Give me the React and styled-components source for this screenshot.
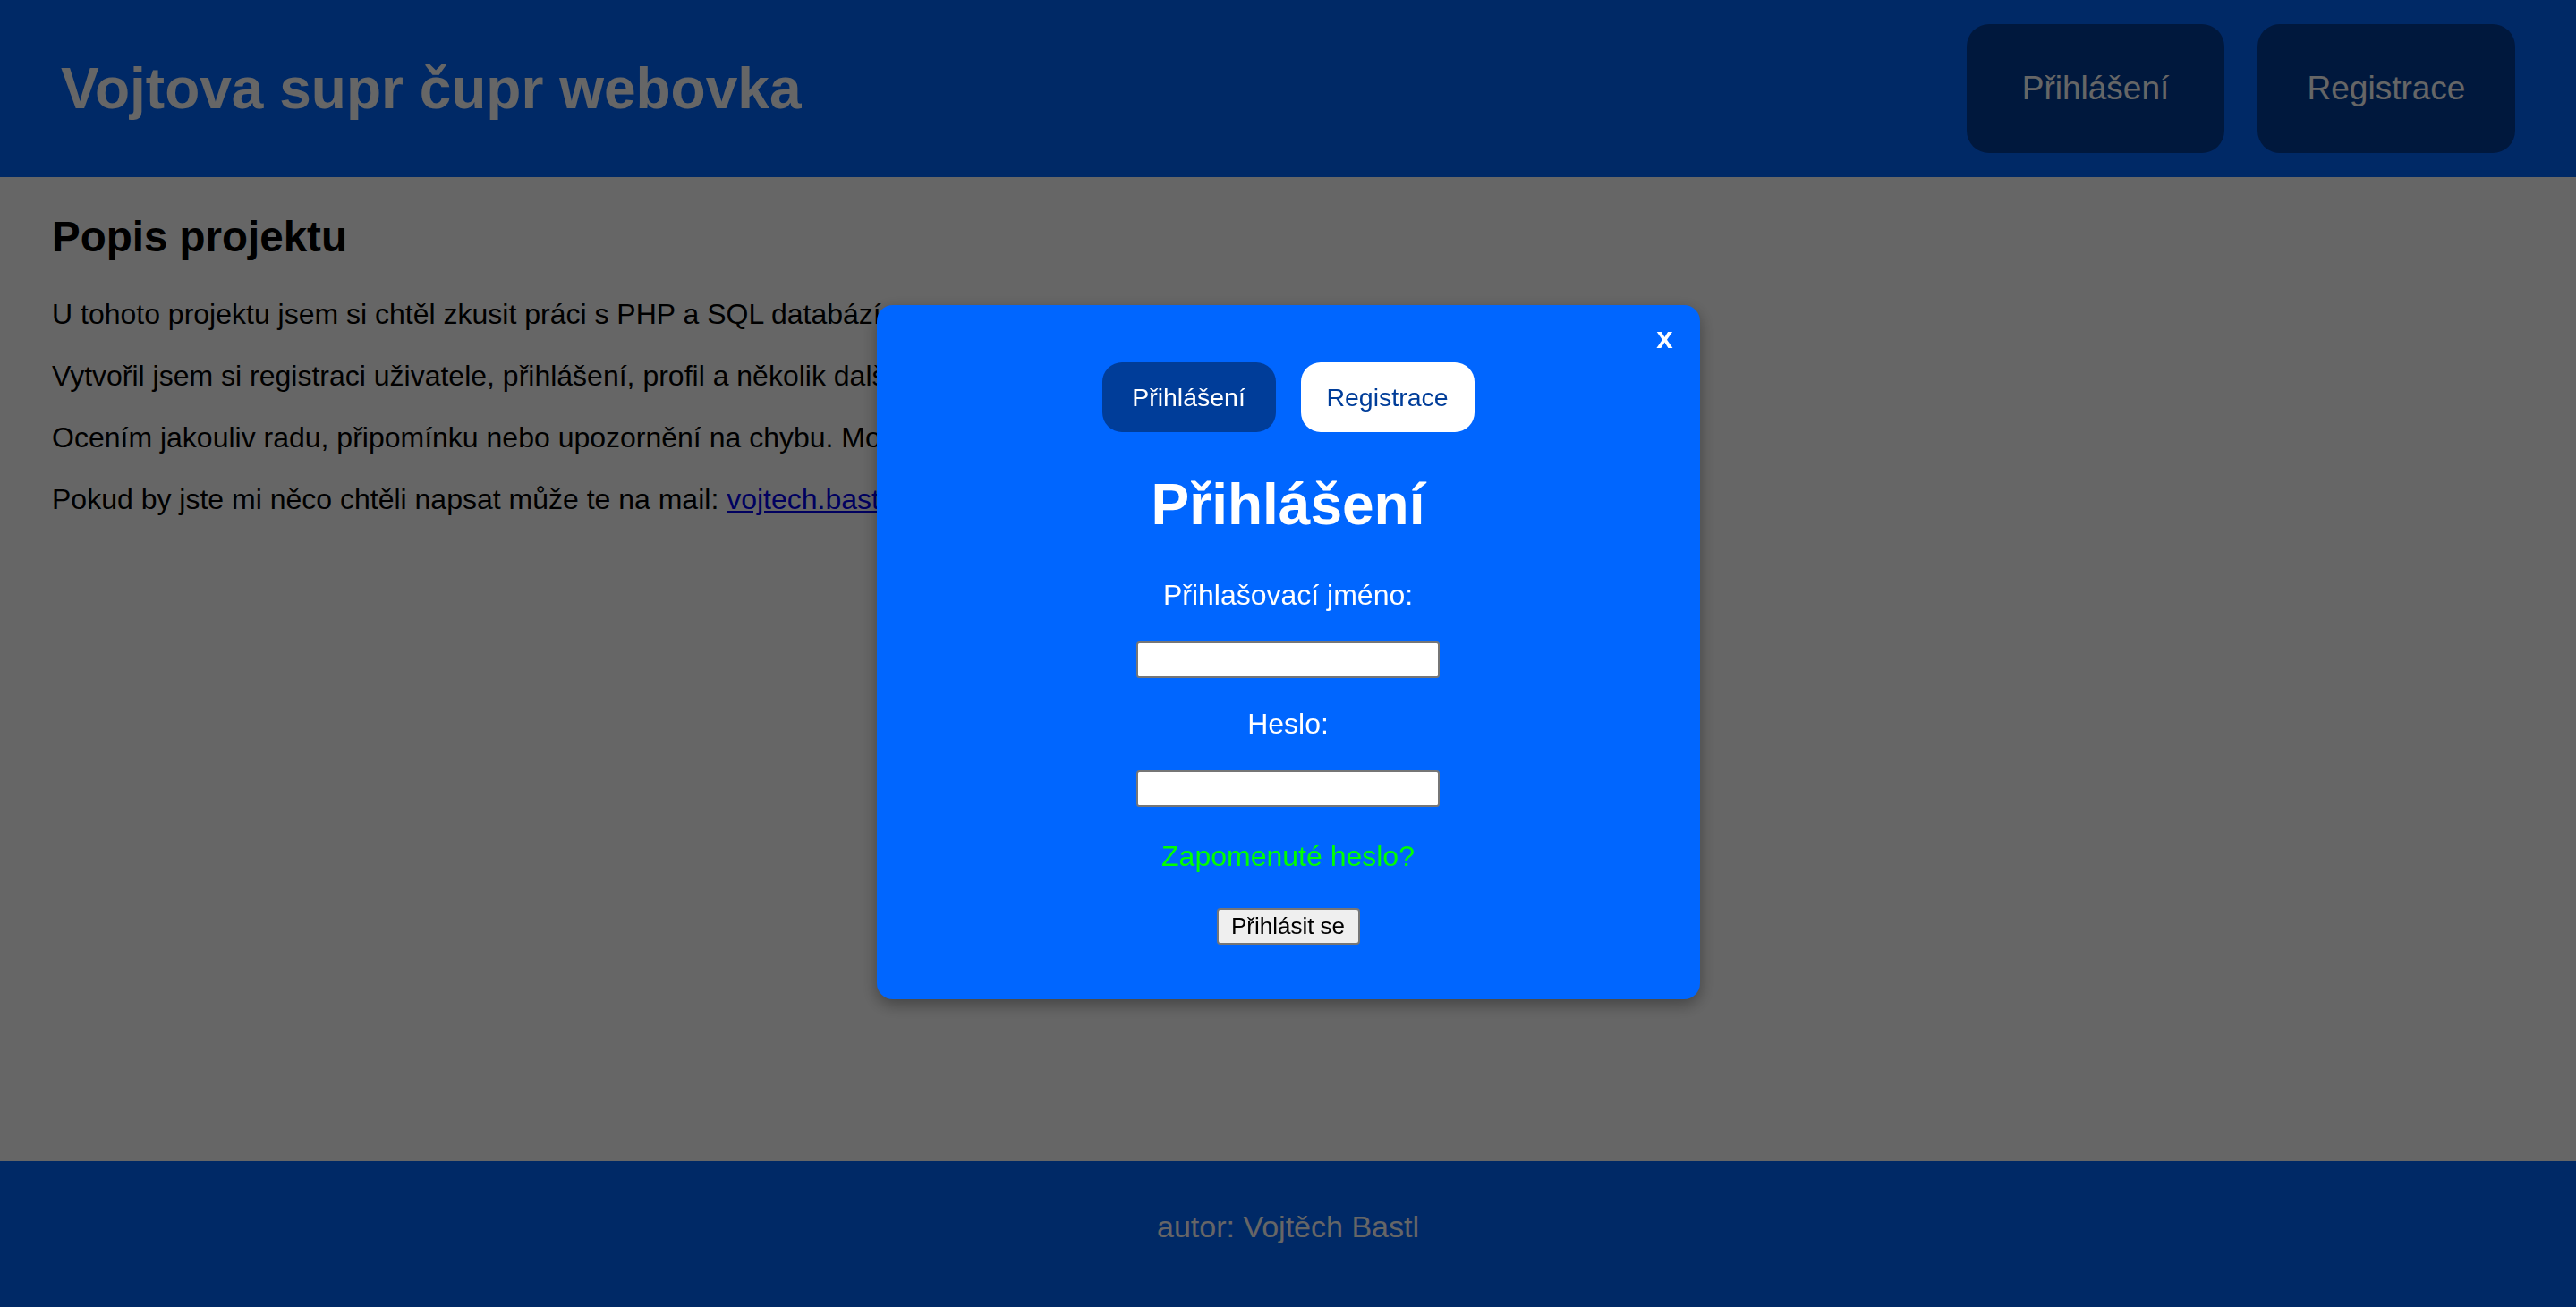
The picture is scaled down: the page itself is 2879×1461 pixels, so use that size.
import React from 'react'
import styled, { createGlobalStyle } from 'styled-components'

const GlobalStyle = createGlobalStyle`
    html, body {
        margin: 0;
        padding: 0;
        background: #fff;
        font-family: "Liberation Sans", Arial, sans-serif;
    }
    * {
        box-sizing: border-box;
    }
`

function App() {
    return (
      <>
        <GlobalStyle />
        <Page>
            <Header>
                <Title>Vojtova supr čupr webovka</Title>
                <HeaderNav>
                    <HeaderButton>Přihlášení</HeaderButton>
                    <HeaderButton>Registrace</HeaderButton>
                </HeaderNav>
            </Header>
            <Main>
                <SectionTitle>Popis projektu</SectionTitle>
                <Text>U tohoto projektu jsem si chtěl zkusit práci s PHP a SQL databází.</Text>
                <Text>Vytvořil jsem si registraci uživatele, přihlášení, profil a několik dalších věcí.</Text>
                <Text>Ocením jakouliv radu, připomínku nebo upozornění na chybu. Moc díky.</Text>
                <Text>
                    Pokud by jste mi něco chtěli napsat může te na mail: <MailLink href="#">vojtech.bastl@seznam.cz</MailLink>
                </Text>
            </Main>
            <Footer>autor: Vojtěch Bastl</Footer>
        </Page>

        <Overlay>
            <Modal>
                <Close>x</Close>
                <Tabs>
                    <Tab active>Přihlášení</Tab>
                    <Tab>Registrace</Tab>
                </Tabs>
                <ModalTitle>Přihlášení</ModalTitle>
                <Label htmlFor="login">Přihlašovací jméno:</Label>
                <Input id="login" type="text" />
                <Label htmlFor="heslo" gap="31px">Heslo:</Label>
                <Input id="heslo" type="password" />
                <Forgot href="#">Zapomenuté heslo?</Forgot>
                <Submit>Přihlásit se</Submit>
            </Modal>
        </Overlay>
      </>
    )
}

export default App

const Page = styled.div`
    display: flex;
    flex-direction: column;
    min-height: 100vh;
`
const Header = styled.header`
    height: 198px;
    background: #0066ff;
    display: flex;
    align-items: center;
    justify-content: space-between;
    padding: 0 68px;
`
const Title = styled.h1`
    margin: 0;
    color: #fff;
    font-size: 64px;
    font-weight: 700;
    line-height: 74px;
`
const HeaderNav = styled.nav`
    display: flex;
    gap: 37px;
`
const HeaderButton = styled.button`
    width: 288px;
    height: 144px;
    border: none;
    border-radius: 25px;
    background: #003d99;
    color: #fff;
    font-family: inherit;
    font-size: 37px;
    cursor: pointer;
`
const Main = styled.main`
    flex: 1;
    padding: 0 58px;
`
const SectionTitle = styled.h2`
    margin: 39px 0 38px;
    font-size: 47.5px;
    line-height: 56px;
    font-weight: 700;
    color: #000;
`
const Text = styled.p`
    margin: 29px 0;
    font-size: 32px;
    line-height: 40px;
    color: #000;
`
const MailLink = styled.a`
    color: #0000ee;
    text-decoration: underline;
`
const Footer = styled.footer`
    height: 163px;
    padding-top: 53px;
    background: #0066ff;
    color: #fff;
    text-align: center;
    font-size: 34px;
    line-height: 40px;
`
const Overlay = styled.div`
    position: fixed;
    inset: 0;
    background: rgba(0, 0, 0, 0.6);
`
const Modal = styled.div`
    position: absolute;
    top: 341px;
    left: 50%;
    transform: translateX(-50%);
    width: 920px;
    padding: 64px 0 61px;
    background: #0066ff;
    border-radius: 18px;
    box-shadow: 0 6px 18px rgba(0, 0, 0, 0.35);
    display: flex;
    flex-direction: column;
    align-items: center;
    color: #fff;
`
const Close = styled.span`
    position: absolute;
    top: 20px;
    right: 30px;
    font-size: 33px;
    line-height: 33px;
    font-weight: 700;
    color: #fff;
    cursor: pointer;
`
const Tabs = styled.div`
    display: flex;
    gap: 28px;
`
const Tab = styled.button`
    width: 194px;
    height: 78px;
    border: none;
    border-radius: 22px;
    background: ${p => (p.active ? '#003d99' : '#fff')};
    color: ${p => (p.active ? '#fff' : '#003d99')};
    font-family: inherit;
    font-size: 28.5px;
    cursor: pointer;
`
const ModalTitle = styled.h2`
    margin: 44px 0 0;
    font-size: 64px;
    line-height: 74px;
    font-weight: 700;
`
const Label = styled.label`
    margin-top: ${p => p.gap || '44px'};
    font-size: 32px;
    line-height: 40px;
`
const Input = styled.input`
    margin-top: 32px;
    width: 339px;
    height: 41px;
    border: 2px solid #767676;
    border-radius: 3.5px;
    background: #fff;
    font-size: 26px;
    padding: 0 4px;
`
const Forgot = styled.a`
    margin-top: 35px;
    font-size: 32px;
    line-height: 40px;
    color: #00ff00;
    text-decoration: none;
`
const Submit = styled.button`
    margin-top: 38px;
    width: 160px;
    height: 41px;
    border: 2px solid #767676;
    border-radius: 4px;
    background: #efefef;
    color: #000;
    font-family: inherit;
    font-size: 26px;
    padding: 0;
`
